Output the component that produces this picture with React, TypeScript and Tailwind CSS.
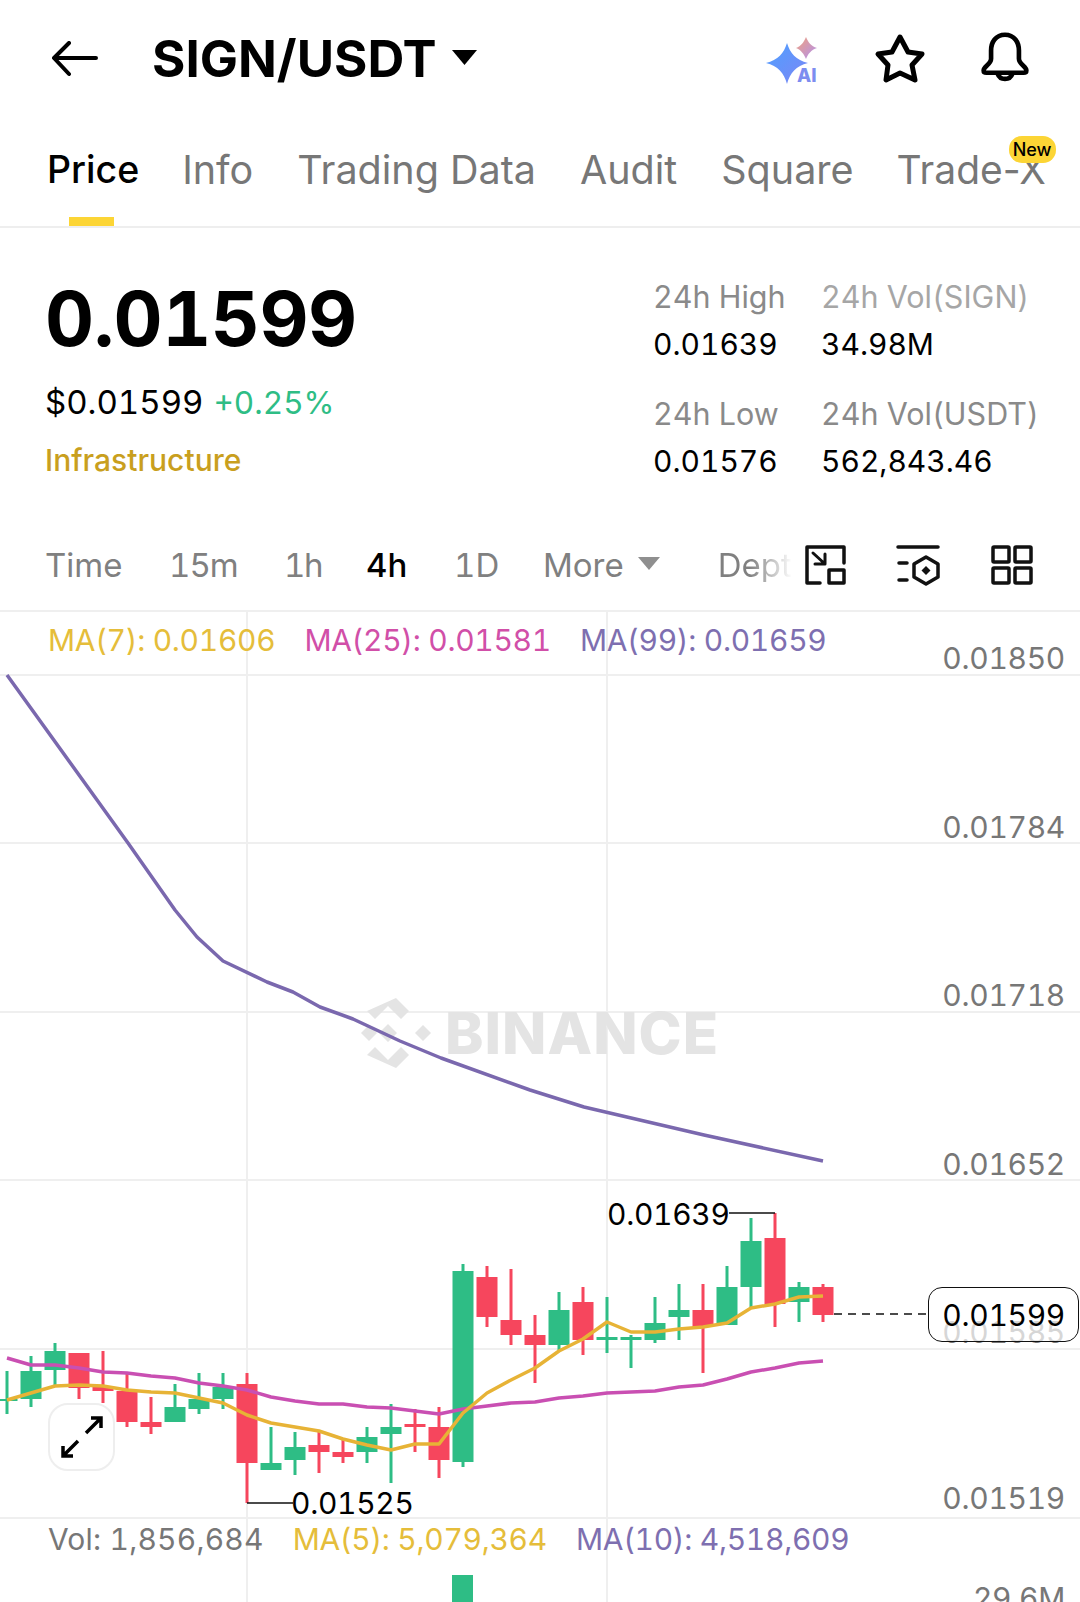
import React from "react";

// [wick top, wick bottom, body top, body bottom, up?]  one candle every 24px from x=7
const candles: [number, number, number, number, boolean][] = [
  [1371, 1414, 1399, 1401, true],
  [1356, 1407, 1371, 1399, true],
  [1343, 1385, 1351, 1370, true],
  [1353, 1399, 1353, 1388, false],
  [1351, 1403, 1387, 1391, false],
  [1373, 1427, 1391, 1422, false],
  [1397, 1434, 1422, 1427, false],
  [1384, 1422, 1407, 1422, true],
  [1373, 1414, 1399, 1409, true],
  [1373, 1409, 1387, 1399, true],
  [1373, 1503, 1384, 1463, false],
  [1427, 1470, 1463, 1470, true],
  [1432, 1475, 1447, 1460, true],
  [1432, 1473, 1445, 1452, false],
  [1440, 1463, 1452, 1457, false],
  [1427, 1463, 1437, 1452, true],
  [1404, 1483, 1427, 1434, true],
  [1409, 1452, 1424, 1427, false],
  [1407, 1478, 1427, 1460, false],
  [1264, 1467, 1271, 1462, true],
  [1266, 1327, 1277, 1317, false],
  [1269, 1345, 1320, 1335, false],
  [1315, 1383, 1335, 1345, false],
  [1292, 1352, 1310, 1345, true],
  [1287, 1355, 1302, 1340, false],
  [1297, 1353, 1337, 1340, true],
  [1335, 1368, 1337, 1340, true],
  [1297, 1343, 1323, 1340, true],
  [1284, 1340, 1310, 1317, true],
  [1284, 1373, 1310, 1327, false],
  [1266, 1325, 1287, 1325, true],
  [1218, 1308, 1241, 1287, true],
  [1213, 1327, 1238, 1304, false],
  [1282, 1322, 1287, 1302, true],
  [1284, 1322, 1287, 1315, false],
];

const ma5 = [1400, 1393, 1386, 1385, 1386, 1390, 1392, 1393, 1398, 1403, 1415, 1423, 1427, 1431, 1439, 1445, 1450, 1444, 1444, 1413, 1393, 1380, 1368, 1351, 1339, 1322, 1332, 1332, 1329, 1327, 1323, 1308, 1304, 1297, 1296];
const ma25 = [1358, 1365, 1365, 1368, 1372, 1373, 1376, 1378, 1383, 1386, 1390, 1397, 1401, 1404, 1404, 1407, 1408, 1411, 1414, 1409, 1406, 1403, 1402, 1398, 1396, 1393, 1392, 1391, 1387, 1385, 1379, 1372, 1368, 1363, 1361];
const ma99 = "7,675 128,843 175,910 197,937 223,961 267,982 293,992 320,1007 353,1019 400,1041 441,1058 530,1090 584,1107 704,1135 823,1161";

const pts = (ys: number[]) => ys.map((y, i) => `${7 + i * 24},${y}`).join(" ");

function ChartDrawing() {
  return (
    <svg className="absolute inset-0" width="1080" height="992" viewBox="0 610 1080 992" fill="none">
      <g stroke="#efefef" strokeWidth="2">
        <path d="M247 611V1602M607 611V1602" />
        <path d="M0 611H1080M0 675H1080M0 843H1080M0 1012H1080M0 1180H1080M0 1349H1080M0 1518H1080" />
      </g>
      <g fill="#e4e4e4">
        <path d="M396 998l13 13-8 8-13-13-13 13-8-8z" />
        <path d="M396 1068l13-13-8-8-13 13-13-13-8 8z" />
        <path d="M361 1033l8-8 8 8-8 8zM415 1033l8-8 8 8-8 8zM379 1033l9-9 9 9-9 9z" />
      </g>
      {candles.map(([wt, wb, bt, bb, up], i) => {
        const x = 7 + i * 24;
        const c = up ? "#2ebd85" : "#f6465d";
        return (
          <g key={i} fill={c}>
            <rect x={x - 1.5} y={wt} width="3" height={wb - wt} />
            <rect x={x - 10.5} y={bt} width="21" height={bb - bt} />
          </g>
        );
      })}
      <rect x="452" y="1575" width="21" height="27" fill="#2ebd85" />
      <polyline points={ma99} stroke="#7a68ae" strokeWidth="3.5" strokeLinejoin="round" />
      <polyline points={pts(ma25)} stroke="#c94fb2" strokeWidth="3.5" strokeLinejoin="round" />
      <polyline points={pts(ma5)} stroke="#e7b336" strokeWidth="3.5" strokeLinejoin="round" />
      <path d="M729 1213H775M247 1503H293" stroke="#111" strokeWidth="1.5" />
      <path d="M834 1314H926" stroke="#111" strokeWidth="1.5" strokeDasharray="8 6" />
    </svg>
  );
}

export default function App() {
  return (
    <div className="h-[1602px] w-[1080px] overflow-hidden bg-white text-black font-['Inter',sans-serif] tabular-nums">
      {/* top bar */}
      <div className="flex h-[118px] items-center pb-[1px] pl-[52px]">
        <svg width="46" height="36" viewBox="52 41 46 36" fill="none" stroke="#000" strokeWidth="4" strokeLinecap="round" strokeLinejoin="round">
          <path d="M96 58H55M69 43L54 58L69 74" />
        </svg>
        <span className="ml-[54px] text-[51px] leading-none font-bold">SIGN/USDT</span>
        <svg className="ml-[14px] mt-[-3px]" width="27" height="17" viewBox="0 0 27 17">
          <path d="M1 1H26L13.5 16z" fill="#000" />
        </svg>
        <div className="ml-auto flex items-center gap-[54px] pr-[49px]">
          <svg className="-mr-[2px]" width="56" height="50" viewBox="766 32 56 50">
            <defs>
              <linearGradient id="sparkA" x1="0" y1="0" x2="1" y2="1">
                <stop offset="0" stopColor="#4ea0ff" />
                <stop offset="1" stopColor="#7d86f5" />
              </linearGradient>
              <linearGradient id="sparkB" x1="0" y1="0" x2="1" y2="1">
                <stop offset="0" stopColor="#f2a27e" />
                <stop offset="1" stopColor="#b090f0" />
              </linearGradient>
            </defs>
            <path d="M788 41C791 51 797 58 809 61C797 64 791 71 788 82C785 71 779 64 767 61C779 58 785 51 788 41Z" fill="url(#sparkA)" />
            <path d="M807 35C809 40 812 44 818 46C812 48 809 52 807 57C805 52 802 48 797 46C802 44 805 40 807 35Z" fill="url(#sparkB)" />
            <text x="798" y="80" fontSize="18.5" fontWeight="800" fill="#7d8df0">AI</text>
          </svg>
          <svg width="54" height="54" viewBox="873 32 54 54" fill="none" stroke="#000" strokeWidth="5" strokeLinejoin="round">
            <path d="M900 37L908 52L922 54L912 65L915 80L900 73L886 80L888 65L878 54L892 52Z" />
          </svg>
          <svg width="52" height="52" viewBox="0 0 56 56" fill="none" stroke="#000" strokeWidth="5" strokeLinejoin="round" className="ml-[-2px] mt-[-3px]">
            <path d="M28 4C18 4 13 12 13 21V30C13 36 5 38 5 42.500Q5 45 8 45H48Q51 45 51 42.500C51 38 43 36 43 30V21C43 12 38 4 28 4Z" />
            <path d="M20 46A8.500 8.500 0 0 0 36 46" />
          </svg>
        </div>
      </div>

      {/* tabs */}
      <div className="relative flex h-[110px] gap-[44px] border-b-2 border-[#eeeeee] pl-[47px] pt-[29px] text-[39.5px] leading-[46px] text-[#777777] normal-nums">
        <div className="relative text-[37.5px] font-medium text-black">
          Price
          <div className="absolute left-[22px] top-[70px] h-[9px] w-[45px] bg-[#fcd535]" />
        </div>
        <span className="-ml-[1px]">Info</span>
        <span>Trading Data</span>
        <span>Audit</span>
        <span>Square</span>
        <div className="relative -ml-[1px] text-[39px]">
          Trade-X
          <span className="absolute left-[112px] top-[-11px] flex h-[27px] w-[47px] items-center justify-center rounded-[13px] bg-[#fcd535] text-[18px] leading-none font-medium text-black">
            New
          </span>
        </div>
      </div>

      {/* price + stats */}
      <div className="flex h-[297px] pl-[45px]">
        <div className="flex w-[608px] flex-col">
          <div className="mt-[45px] text-[76px] leading-[90px] font-bold tracking-[-0.5px]">0.01599</div>
          <div className="mt-[19px] flex items-baseline gap-[10px] text-[33px] leading-[40px]">
            <span>$0.01599</span>
            <span className="text-[31.5px] text-[#2ebd85]">+0.25%</span>
          </div>
          <div className="mt-[18px] text-[30px] leading-[38px] font-medium text-[#c99f1e]">Infrastructure</div>
        </div>
        <div className="mt-[50px] grid h-fit grid-cols-[168px_auto] gap-y-[32px] text-[30px] leading-[38px]">
          <div>
            <div className="text-[30.5px] text-[#8a8a8a]">24h High</div>
            <div className="mt-[9px]">0.01639</div>
          </div>
          <div>
            <div className="text-[30.5px] text-[#a6a6a6]">24h Vol(SIGN)</div>
            <div className="mt-[9px]">34.98M</div>
          </div>
          <div>
            <div className="text-[30.5px] text-[#8a8a8a]">24h Low</div>
            <div className="mt-[9px]">0.01576</div>
          </div>
          <div>
            <div className="text-[30.5px] text-[#8a8a8a]">24h Vol(USDT)</div>
            <div className="mt-[9px]">562,843.46</div>
          </div>
        </div>
      </div>

      {/* interval row */}
      <div className="flex h-[85px] items-center pb-[5px] pl-[45px] text-[33px] leading-none text-[#808080]">
        <span className="w-[124px]">Time</span>
        <span className="w-[115px] tracking-[-1px]">15m</span>
        <span className="w-[82px] tracking-[-1.5px]">1h</span>
        <span className="w-[88px] font-medium text-black">4h</span>
        <span className="w-[89px]">1D</span>
        <span>More</span>
        <svg className="ml-[14px] mt-[-4px]" width="22" height="13" viewBox="0 0 22 13">
          <path d="M0 0H22L11 13z" fill="#8f8f8f" />
        </svg>
        <span className="ml-[58px] w-[78px] overflow-hidden bg-linear-to-r from-[#808080] from-40% to-[#ffffff] to-95% bg-clip-text text-transparent">Depth</span>
        <svg className="ml-[8px]" width="42" height="42" viewBox="804 543 42 42" fill="none" stroke="#111" strokeWidth="3.5" strokeLinejoin="round" strokeLinecap="round">
          <path d="M844 562V546H807V582H820" />
          <rect x="829" y="569" width="15" height="13" />
          <path d="M813 552L825 563M825 553V563H815" strokeWidth="3" />
        </svg>
        <svg className="ml-[50px]" width="44" height="42" viewBox="896 544 44 42" fill="none" stroke="#111" strokeWidth="3.5" strokeLinejoin="round" strokeLinecap="round">
          <path d="M898 547H938M899 563H907M899 580H907" />
          <path d="M926 557L938 564V577L926 584L914 577V564Z" />
          <path d="M926 566L930.500 570.500L926 575L921.500 570.500Z" fill="#111" stroke="none" />
        </svg>
        <svg className="ml-[51px]" width="42" height="42" viewBox="990 543 42 42" fill="none" stroke="#111" strokeWidth="3.5" strokeLinejoin="round">
          <rect x="992" y="546" width="16" height="15" rx="1" />
          <rect x="1014" y="546" width="16" height="15" rx="1" />
          <rect x="992" y="567" width="16" height="15" rx="1" />
          <rect x="1014" y="567" width="16" height="15" rx="1" />
        </svg>
      </div>

      {/* chart: free canvas, everything below sits on it */}
      <div className="relative h-[992px] text-[30px] leading-none tracking-[-0.3px]">
        <ChartDrawing />

        <span className="absolute left-[445px] top-[394px] text-[58px] leading-none font-extrabold tracking-[1px] text-[#e4e4e4]">BINANCE</span>

        <div className="absolute left-[48px] top-[15px] flex gap-[29px]">
          <span className="text-[#e5bd3a]">MA(7): 0.01606</span>
          <span className="text-[#d14fa8]">MA(25): 0.01581</span>
          <span className="text-[#7e6fb0]">MA(99): 0.01659</span>
        </div>

        <span className="absolute right-[15px] top-[33px] text-[#777777]">0.01850</span>
        <span className="absolute right-[15px] top-[202px] text-[#777777]">0.01784</span>
        <span className="absolute right-[15px] top-[370px] text-[#777777]">0.01718</span>
        <span className="absolute right-[15px] top-[539px] text-[#777777]">0.01652</span>
        <span className="absolute right-[15px] top-[707px] text-[#777777]">0.01585</span>
        <span className="absolute right-[15px] top-[873px] text-[#777777]">0.01519</span>
        <span className="absolute right-[15px] top-[973px] text-[#777777]">29.6M</span>

        <span className="absolute left-[607px] top-[589px] text-black">0.01639</span>
        <span className="absolute left-[291px] top-[878px] text-black">0.01525</span>

        <div className="absolute left-[928px] top-[677px] flex h-[55px] w-[151px] items-center justify-end rounded-[14px] border-[1.5px] border-[#111111] bg-white/70 pr-[13px] text-black">
          0.01599
        </div>

        <div className="absolute left-[48px] top-[793px] flex h-[68px] w-[67px] items-center justify-center rounded-[20px] border-2 border-[#eeeeee] bg-white/60">
          <svg width="44" height="44" viewBox="59 1415 44 44" fill="none" stroke="#000" strokeWidth="3.5">
            <path d="M85 1433L100 1418M90 1418H100V1428" />
            <path d="M77 1441L62 1456M62 1446V1456H72" />
          </svg>
        </div>

        <div className="absolute left-[48px] top-[914px] flex gap-[29px]">
          <span className="tracking-[0.2px] text-[#777777]">Vol: 1,856,684</span>
          <span className="text-[#e5bd3a]">MA(5): 5,079,364</span>
          <span className="text-[#7e6fb0]">MA(10): 4,518,609</span>
        </div>
      </div>
    </div>
  );
}
